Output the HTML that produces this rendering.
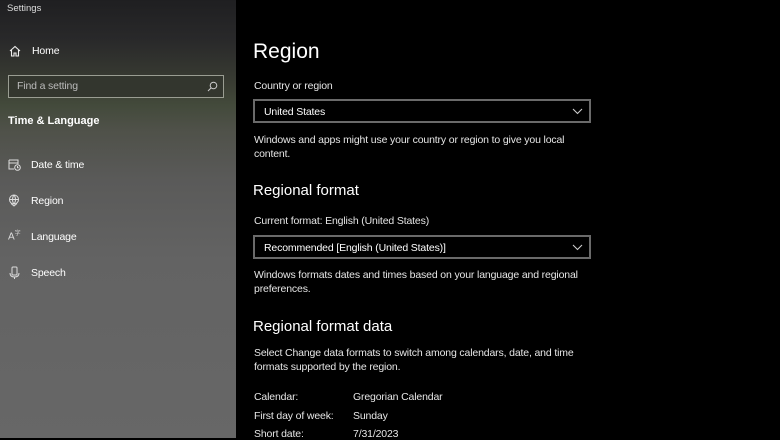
<!DOCTYPE html>
<html><head><meta charset="utf-8"><style>
*{margin:0;padding:0;box-sizing:border-box}
body{width:780px;height:438px;overflow:hidden;background:#000;font-family:"Liberation Sans",sans-serif;color:#fff;position:relative}
.side{position:absolute;left:0;top:0;width:236px;height:438px;background:linear-gradient(180deg,#1f1f21 0px,#29292a 40px,#3a3d33 85px,#434a3b 105px,#4f5149 130px,#5a5a59 180px,#636363 260px,#676767 438px)}
.t{position:absolute;white-space:nowrap;line-height:1}
.s{font-size:10.5px;letter-spacing:-0.15px}
.dd{position:absolute;left:253px;width:338px;height:24px;border:2px solid #6a6a6a}
.dd span{position:absolute;left:9px;top:5px;font-size:10.5px;letter-spacing:-0.15px}
.dd svg{position:absolute;right:6px;top:7px}
.g{color:#e6e6e6}
</style></head><body>
<div class="side"></div>
<div class="t" style="left:7px;top:4px;font-size:9.5px;color:#ddd">Settings</div>
<svg style="position:absolute;left:9px;top:45px" width="12" height="12" viewBox="0 0 12 12" fill="none" stroke="#eee" stroke-width="1.1"><path d="M1 6 6 1.5 11 6M2.5 5v6h2.5V8h2v3h2.5V5"/></svg>
<div class="t s" style="left:32px;top:46px">Home</div>
<div style="position:absolute;left:8px;top:75px;width:216px;height:23px;border:1px solid #9a9d92;background:#33362e"></div>
<div class="t s" style="left:17px;top:81px;color:#bbb">Find a setting</div>
<svg style="position:absolute;left:207px;top:81px" width="11" height="11" viewBox="0 0 11 11" fill="none" stroke="#ccc" stroke-width="1"><circle cx="6.5" cy="4.5" r="3.3"/><path d="M4 7 1 10"/></svg>
<div class="t" style="left:8px;top:116px;font-size:11px;font-weight:bold">Time &amp; Language</div>
<svg style="position:absolute;left:8px;top:158px" width="13" height="13" viewBox="0 0 13 13" fill="none" stroke="#ddd" stroke-width="1"><path d="M1 2h9v4M1 2v9h5M1 5h9"/><circle cx="9.5" cy="9.5" r="2.8"/><path d="M9.5 8v1.7h1.2"/></svg>
<div class="t s" style="left:31px;top:160px">Date &amp; time</div>
<svg style="position:absolute;left:8px;top:194px" width="12" height="13" viewBox="0 0 12 13" fill="none" stroke="#ddd" stroke-width="1"><circle cx="6" cy="5.5" r="4.5"/><path d="M1.5 5.5h9M6 1c-2 2.5-2 6.5 0 9M6 1c2 2.5 2 6.5 0 9M3 9.5 6 12 9 9.5"/></svg>
<div class="t s" style="left:31px;top:196px">Region</div>
<div class="t" style="left:8px;top:231px;font-size:10px;color:#ddd">A<sup style="font-size:6px">字</sup></div>
<div class="t s" style="left:31px;top:232px">Language</div>
<svg style="position:absolute;left:9px;top:266px" width="11" height="13" viewBox="0 0 11 13" fill="none" stroke="#ddd" stroke-width="1"><rect x="3" y="1" width="5" height="8" rx="1"/><path d="M1 7c0 3 2 4 4.5 4S10 10 10 7M5.5 11v2"/></svg>
<div class="t s" style="left:31px;top:268px">Speech</div>

<div class="t" style="left:253px;top:41px;font-size:21px">Region</div>
<div class="t s g" style="left:254px;top:81px">Country or region</div>
<div class="dd" style="top:99px"><span>United States</span><svg width="11" height="7" viewBox="0 0 11 7" fill="none" stroke="#ccc" stroke-width="1.1"><path d="M1 1l4.5 4.5L10 1"/></svg></div>
<div class="t s g" style="left:254px;top:133px;line-height:14px">Windows and apps might use your country or region to give you local<br>content.</div>
<div class="t" style="left:253px;top:183px;font-size:15px">Regional format</div>
<div class="t s g" style="left:254px;top:216px">Current format: English (United States)</div>
<div class="dd" style="top:235px"><span>Recommended [English (United States)]</span><svg width="11" height="7" viewBox="0 0 11 7" fill="none" stroke="#ccc" stroke-width="1.1"><path d="M1 1l4.5 4.5L10 1"/></svg></div>
<div class="t s g" style="left:254px;top:268px;line-height:14px">Windows formats dates and times based on your language and regional<br>preferences.</div>
<div class="t" style="left:253px;top:319px;font-size:15px">Regional format data</div>
<div class="t s g" style="left:254px;top:346px;line-height:14px">Select Change data formats to switch among calendars, date, and time<br>formats supported by the region.</div>
<div class="t s g" style="left:254px;top:392px">Calendar:</div>
<div class="t s g" style="left:353px;top:392px">Gregorian Calendar</div>
<div class="t s g" style="left:254px;top:411px">First day of week:</div>
<div class="t s g" style="left:353px;top:411px">Sunday</div>
<div class="t s g" style="left:254px;top:429px">Short date:</div>
<div class="t s g" style="left:353px;top:429px">7/31/2023</div>
</body></html>
